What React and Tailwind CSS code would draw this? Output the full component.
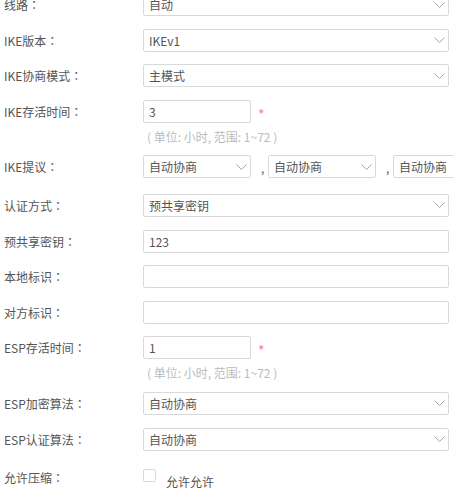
import React from 'react';

const font = { fontFamily: '"Noto Sans CJK SC", "Liberation Sans", sans-serif' };
const colonFont = { fontFamily: '"Noto Sans CJK TC", "Noto Sans CJK SC", sans-serif' };

const Chevron = () => (
  <svg
    width="11"
    height="6"
    viewBox="0 0 11 6"
    className="absolute right-[3px] top-1/2 -translate-y-1/2"
  >
    <polyline points="0.5,0.5 5.5,5.5 10.5,0.5" fill="none" stroke="#a6a6a6" strokeWidth="1" />
  </svg>
);

const Select = ({ value, wide = true, chevron = true }) => (
  <div
    className={`relative shrink-0 h-[23px] border border-[#d9d9d9] rounded-[2px] bg-white pl-[5px] text-[12px] leading-[21px] text-[#555] ${
      wide ? 'w-[306px]' : 'w-[108px]'
    }`}
  >
    {value}
    {chevron && <Chevron />}
  </div>
);

const Input = ({ value = '', wide = true }) => (
  <div
    className={`shrink-0 h-[23px] border border-[#d9d9d9] rounded-[2px] bg-white pl-[5px] text-[12px] leading-[21px] text-[#555] ${
      wide ? 'w-[306px]' : 'w-[108px]'
    }`}
  >
    {value}
  </div>
);

const Row = ({ label, children }) => (
  <div className="flex items-start">
    <div className="w-[139px] shrink-0 h-[23px] text-[12px] leading-[23px] text-[#555] whitespace-nowrap">
      {label}
      <span style={colonFont}>：</span>
    </div>
    <div className="flex flex-col">{children}</div>
  </div>
);

const Hint = () => (
  <div className="mt-[8px] h-[12px] pl-[4px] text-[12px] leading-[12px] text-[#bbb] whitespace-nowrap">
    ( 单位: 小时, 范围: 1~72 )
  </div>
);

const Required = ({ value }) => (
  <>
    <div className="flex items-start">
      <Input value={value} wide={false} />
      <span className="ml-[7px] mt-[7px] text-[14px] leading-[14px] text-[#ff7a8f]">*</span>
    </div>
    <Hint />
  </>
);

const Comma = () => (
  <span className="w-[17px] shrink-0 pl-[10px] text-[12px] leading-[26px] text-[#555]">,</span>
);

export default function App() {
  return (
    <div className="w-[454px] h-[488px] overflow-hidden bg-white" style={font}>
      <div className="-mt-[7px] pl-[4px] flex flex-col gap-y-[12.6px]">
        <Row label="线路">
          <Select value="自动" />
        </Row>
        <Row label="IKE版本">
          <Select value="IKEv1" />
        </Row>
        <Row label="IKE协商模式">
          <Select value="主模式" />
        </Row>
        <Row label="IKE存活时间">
          <Required value="3" />
        </Row>
        <Row label="IKE提议">
          <div className="flex items-start">
            <Select value="自动协商" wide={false} />
            <Comma />
            <Select value="自动协商" wide={false} />
            <Comma />
            <Select value="自动协商" wide={false} chevron={false} />
          </div>
        </Row>
        <Row label="认证方式">
          <Select value="预共享密钥" />
        </Row>
        <Row label="预共享密钥">
          <Input value="123" />
        </Row>
        <Row label="本地标识">
          <Input />
        </Row>
        <Row label="对方标识">
          <Input />
        </Row>
        <Row label="ESP存活时间">
          <Required value="1" />
        </Row>
        <Row label="ESP加密算法">
          <Select value="自动协商" />
        </Row>
        <Row label="ESP认证算法">
          <Select value="自动协商" />
        </Row>
        <div className="mt-[3px]">
          <Row label="允许压缩">
            <div className="flex items-start">
              <span className="mt-[3px] w-[13px] h-[13px] border border-[#d9d9d9] rounded-[2px] bg-white" />
              <span className="ml-[10px] mt-[8px] text-[12px] leading-[16px] text-[#555]">允许允许</span>
            </div>
          </Row>
        </div>
      </div>
    </div>
  );
}
